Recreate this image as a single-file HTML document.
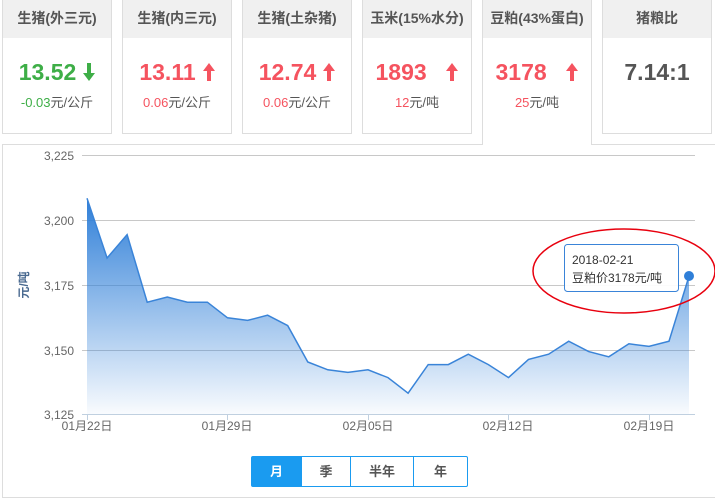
<!DOCTYPE html>
<html><head><meta charset="utf-8"><style>
*{margin:0;padding:0;box-sizing:border-box}
body{width:715px;height:499px;background:#fff;font-family:"Liberation Sans","Noto Sans CJK SC",sans-serif;position:relative;overflow:hidden}
.card{position:absolute;top:-1px;width:110px;height:135px;border:1px solid #ddd;background:#fff;text-align:center}
.card .h{height:38px;background:#f0f0f0;font-size:14px;font-weight:bold;color:#555;line-height:36px}
.card .v{font-size:23px;font-weight:bold;margin-top:20px;line-height:28px}
.card .s{font-size:13px;color:#555;margin-top:6px}
.g{color:#3eae47}.r{color:#f5535f}
.act{height:146px;border-bottom:none}
.panel{position:absolute;left:2px;top:144px;width:720px;height:354px;border:1px solid #ddd;border-right:none}
.btns{position:absolute;left:251px;top:456px;height:31px;display:flex;border:1px solid #1a9bf0;border-radius:2px}
.btns div{font-size:13px;font-weight:bold;color:#555;line-height:29px;text-align:center;border-left:1px solid #1a9bf0}
.btns div:first-child{border-left:none;background:#1a9bf0;color:#fff}
svg.a{vertical-align:-1px;margin-left:7px}
</style></head><body>
<div class="panel"></div>
<div class="card" style="left:2px"><div class="h">生猪(外三元)</div><div class="v g">13.52<svg class="a" width="12" height="18" viewBox="0 0 12 18"><path d="M4,0H8V10H12L6,18L0,10H4Z" fill="#3eae47"/></svg></div><div class="s"><span class="g">-0.03</span>元/公斤</div></div>
<div class="card" style="left:122px"><div class="h">生猪(内三元)</div><div class="v r">13.11<svg class="a" width="12" height="18" viewBox="0 0 12 18"><path d="M4,18H8V8H12L6,0L0,8H4Z" fill="#f5535f"/></svg></div><div class="s"><span class="r">0.06</span>元/公斤</div></div>
<div class="card" style="left:242px"><div class="h">生猪(土杂猪)</div><div class="v r">12.74<svg class="a" width="12" height="18" viewBox="0 0 12 18"><path d="M4,18H8V8H12L6,0L0,8H4Z" fill="#f5535f"/></svg></div><div class="s"><span class="r">0.06</span>元/公斤</div></div>
<div class="card" style="left:362px"><div class="h">玉米(15%水分)</div><div class="v r">1893 &nbsp;<svg class="a" width="12" height="18" viewBox="0 0 12 18"><path d="M4,18H8V8H12L6,0L0,8H4Z" fill="#f5535f"/></svg></div><div class="s"><span class="r">12</span>元/吨</div></div>
<div class="card act" style="left:482px"><div class="h">豆粕(43%蛋白)</div><div class="v r">3178 &nbsp;<svg class="a" width="12" height="18" viewBox="0 0 12 18"><path d="M4,18H8V8H12L6,0L0,8H4Z" fill="#f5535f"/></svg></div><div class="s"><span class="r">25</span>元/吨</div></div>
<div class="card" style="left:602px"><div class="h">猪粮比</div><div class="v" style="color:#555">7.14:1</div></div>
<svg width="715" height="499" style="position:absolute;left:0;top:0">
<defs><linearGradient id="gr" x1="0" y1="0" x2="0" y2="1"><stop offset="0" stop-color="#2f7fd8"/><stop offset="1" stop-color="#2f7fd8" stop-opacity="0.03"/></linearGradient></defs>
<g stroke="#c8c8c8" stroke-width="1"><line x1="82" y1="155.5" x2="695" y2="155.5"/><line x1="82" y1="220.5" x2="695" y2="220.5"/><line x1="82" y1="285.5" x2="695" y2="285.5"/><line x1="82" y1="350.5" x2="695" y2="350.5"/></g>
<g font-size="12" fill="#666" text-anchor="end"><text x="74" y="160">3,225</text><text x="74" y="225">3,200</text><text x="74" y="290">3,175</text><text x="74" y="355">3,150</text><text x="74" y="419">3,125</text></g>
<text transform="translate(28,285) rotate(-90)" font-size="12" fill="#4a6a90" text-anchor="middle" font-weight="bold">元/吨</text>
<path d="M87,198.2 L107.1,258 127.1,234.6 147.2,302.2 167.3,297 187.4,302.2 207.4,302.2 227.5,317.8 247.6,320.4 267.6,315.2 287.7,325.6 307.8,362 327.8,369.8 347.9,372.4 368,369.8 388,377.6 408.1,393.2 428.2,364.6 448.3,364.6 468.3,354.2 488.4,364.6 508.5,377.6 528.5,359.4 548.6,354.2 568.7,341.2 588.7,351.6 608.8,356.8 628.9,343.8 649,346.4 669,341.2 689,276.2 L689,414 L87,414Z" fill="url(#gr)"/>
<path d="M87,198.2 L107.1,258 127.1,234.6 147.2,302.2 167.3,297 187.4,302.2 207.4,302.2 227.5,317.8 247.6,320.4 267.6,315.2 287.7,325.6 307.8,362 327.8,369.8 347.9,372.4 368,369.8 388,377.6 408.1,393.2 428.2,364.6 448.3,364.6 468.3,354.2 488.4,364.6 508.5,377.6 528.5,359.4 548.6,354.2 568.7,341.2 588.7,351.6 608.8,356.8 628.9,343.8 649,346.4 669,341.2 689,276.2" fill="none" stroke="#3a84d8" stroke-width="1.5"/>
<line x1="82" y1="414.5" x2="695" y2="414.5" stroke="#c0d0e0"/>
<g stroke="#c0d0e0"><line x1="87.5" y1="414" x2="87.5" y2="420"/><line x1="227.5" y1="414" x2="227.5" y2="420"/><line x1="368.5" y1="414" x2="368.5" y2="420"/><line x1="508.5" y1="414" x2="508.5" y2="420"/><line x1="649.5" y1="414" x2="649.5" y2="420"/></g>
<g font-size="12" fill="#666" text-anchor="middle"><text x="87" y="430">01月22日</text><text x="227" y="430">01月29日</text><text x="368" y="430">02月05日</text><text x="508" y="430">02月12日</text><text x="649" y="430">02月19日</text></g>
<rect x="564.5" y="244.5" width="114" height="47" rx="3" fill="#fff" fill-opacity="0.92" stroke="#3a84d8"/>
<text x="572" y="264" font-size="12" fill="#333">2018-02-21</text>
<text x="572" y="282" font-size="12" fill="#333">豆粕价3178元/吨</text>
<circle cx="689" cy="276" r="5" fill="#2f7fd8"/>
<ellipse cx="624" cy="271" rx="91" ry="42" fill="none" stroke="#e8000e" stroke-width="1.5"/>
</svg>
<div class="btns"><div style="width:49px">月</div><div style="width:49px">季</div><div style="width:63px">半年</div><div style="width:54px">年</div></div>
</body></html>
